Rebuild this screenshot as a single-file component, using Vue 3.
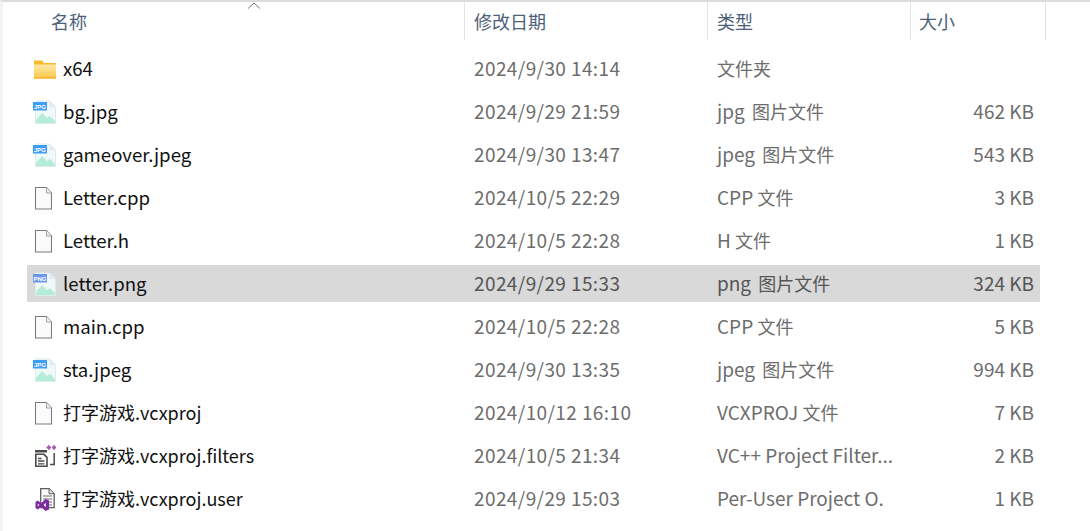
<script setup>
const rows = [
  { icon: 'folder', name: 'x64', date: '2024/9/30 14:14', latin: '', type: '文件夹', size: '' },
  { icon: 'jpg', name: 'bg.jpg', date: '2024/9/29 21:59', latin: 'jpg ', type: '图片文件', size: '462 KB' },
  { icon: 'jpg', name: 'gameover.jpeg', date: '2024/9/30 13:47', latin: 'jpeg ', type: '图片文件', size: '543 KB' },
  { icon: 'file', name: 'Letter.cpp', date: '2024/10/5 22:29', latin: 'CPP ', type: '文件', size: '3 KB' },
  { icon: 'file', name: 'Letter.h', date: '2024/10/5 22:28', latin: 'H ', type: '文件', size: '1 KB' },
  { icon: 'png', name: 'letter.png', date: '2024/9/29 15:33', latin: 'png ', type: '图片文件', size: '324 KB', selected: true },
  { icon: 'file', name: 'main.cpp', date: '2024/10/5 22:28', latin: 'CPP ', type: '文件', size: '5 KB' },
  { icon: 'jpg', name: 'sta.jpeg', date: '2024/9/30 13:35', latin: 'jpeg ', type: '图片文件', size: '994 KB' },
  { icon: 'file', name: '打字游戏.vcxproj', cjk: true, date: '2024/10/12 16:10', latin: 'VCXPROJ ', type: '文件', size: '7 KB' },
  { icon: 'filters', name: '打字游戏.vcxproj.filters', cjk: true, date: '2024/10/5 21:34', latin: 'VC++ Project Filter...', type: '', size: '2 KB' },
  { icon: 'user', name: '打字游戏.vcxproj.user', cjk: true, date: '2024/9/29 15:03', latin: 'Per-User Project O.', type: '', size: '1 KB' },
]
</script>

<template>
  <div class="page">
    <div class="head">
      <div class="hcell first">名称<svg class="caret" width="14" height="7" viewBox="0 0 14 7"><path d="M1 6.500 7 1l6 5.500" fill="none" stroke="#6f6f6f" stroke-width="1"/></svg></div>
      <div class="hcell">修改日期</div>
      <div class="hcell">类型</div>
      <div class="hcell last">大小</div>
    </div>
    <div class="list">
      <div v-for="r in rows" :key="r.name" class="row" :class="{ selected: r.selected }">
        <div class="name">
          <span class="icon">
            <svg v-if="r.icon === 'folder'" width="24" height="24" viewBox="0 0 24 24">
              <defs>
                <linearGradient id="fold" x1="0" y1="0" x2="0" y2="1">
                  <stop offset="0" stop-color="#fee9a6"/>
                  <stop offset="1" stop-color="#fcc94f"/>
                </linearGradient>
              </defs>
              <path d="M2 3.500h8l2 2.500h12v15.500H2z" fill="#f8b92b"/>
              <path d="M2 7.500h22v13H2z" fill="url(#fold)"/>
              <path d="M2 20h22v1.500H2z" fill="#f6b62e"/>
            </svg>
            <svg v-else-if="r.icon === 'jpg' || r.icon === 'png'" width="24" height="24" viewBox="0 0 24 24">
              <path d="M3.500 1h14l6 6v16.500h-20z" fill="#f1f8f9" stroke="#dcebec"/>
              <path d="M17.500 1v6h6" fill="#dfecee"/>
              <path d="M4 23v-3l6-7 5 5 3-2 5 5v2z" fill="#b4ecd7"/>
              <rect x="1" y="2" width="14" height="8.500" :fill="r.icon === 'jpg' ? '#3c9ef5' : '#6a96ec'"/>
              <text x="8" y="8.700" class="tag">{{ r.icon === 'jpg' ? 'JPG' : 'PNG' }}</text>
            </svg>
            <svg v-else-if="r.icon === 'file'" width="24" height="24" viewBox="0 0 24 24">
              <path d="M3.500 1.500h11l5 5.500v16h-16z" fill="#fbfbfb" stroke="#7c7c7c" stroke-width="1.100"/>
              <path d="M14.500 1.500V7h5" fill="#f1f1f1" stroke="#9a9a9a" stroke-width=".9"/>
            </svg>
            <svg v-else-if="r.icon === 'filters'" width="24" height="24" viewBox="0 0 24 24">
              <path d="M3 6h12v2.500H3z" fill="#4a4a4a"/>
              <path d="M3.800 10.300h8l3.200 3v9h-11.200z" fill="#fff" stroke="#4a4a4a" stroke-width="1.600"/>
              <path d="M6 14.500h3.500M6 17h6.500M6 19.800h6.500" stroke="#4a4a4a" stroke-width="1.300"/>
              <path d="M18 20.500h4.200V9" fill="none" stroke="#4a4a4a" stroke-width="1.500"/>
              <path d="M14.500 3.500h4.500M16.800 1.200v4.600M20 3.500h4M22 1.200v4.600" stroke="#a855b5" stroke-width="1.800"/>
            </svg>
            <svg v-else width="24" height="24" viewBox="0 0 24 24">
              <path d="M8.700 1.700h8.500l5 5v14h-13.500z" fill="#fafafa" stroke="#5e5e5e" stroke-width="1.300"/>
              <path d="M17 1.700v5h5" fill="#e4e4e4" stroke="#5e5e5e"/>
              <path d="M11 9h9M11 12h9M15 15h5M15 18h5" stroke="#6e6e6e" stroke-width="1.200"/>
              <path d="M3.500 15 6 13.500 9 16.300 13.500 12 17 13.600V22.400L13.500 24 9 19.700 6 22.500 3.500 21ZM5.800 16.500V19.500L7.300 18ZM13.800 15.800 11.500 18 13.800 20.200Z" fill="#7b2aa0" fill-rule="evenodd"/>
            </svg>
          </span>
          <span class="label" :class="{ wide: !r.cjk }">{{ r.name }}</span>
        </div>
        <div class="cell muted date">{{ r.date }}</div>
        <div class="cell muted"><span class="latin">{{ r.latin }}</span><span :class="{ pic: r.type === '图片文件' }">{{ r.type }}</span></div>
        <div class="cell muted size">{{ r.size }}</div>
      </div>
    </div>
  </div>
</template>

<style>
html, body { margin: 0; background: #fff; }
</style>

<style scoped>
.page {
  width: 1090px;
  height: 531px;
  box-sizing: border-box;
  overflow: hidden;
  background: #fff;
  border-top: 2px solid #dcdcdc;
  border-left: 3px solid #f3f3f3;
  font-family: "Noto Sans CJK SC", "Noto Sans", sans-serif;
  font-size: 18px;
}
.head {
  display: grid;
  grid-template-columns: 462px 243px 203px 135px;
  height: 38px;
  color: #4c607a;
}
.hcell {
  position: relative;
  border-right: 1px solid #e5e5e5;
  padding-left: 9px;
  line-height: 38px;
}
.hcell.first { padding-left: 48px; }
.hcell.last { padding-left: 8px; }
.caret { position: absolute; left: 244px; top: 0; }
.list {
  display: flex;
  flex-direction: column;
  gap: 6px;
  padding: 10px 0 0 24px;
}
.row {
  display: grid;
  grid-template-columns: 438px 243px 203px 129px;
  height: 37px;
  align-items: center;
  width: 1013px;
}
.row.selected { background: #d9d9d9; }
.name { display: flex; align-items: center; color: #111; padding-left: 5px; }
.icon { width: 24px; height: 24px; margin-right: 7px; display: flex; }
.label { white-space: nowrap; line-height: 27px; }
.label.wide { font-size: 18.6px; margin-bottom: 2px; }
.tag {
  font-family: "Liberation Sans", sans-serif;
  font-size: 6px;
  font-weight: 700;
  fill: #fff;
  text-anchor: middle;
}
.cell { padding-left: 9px; white-space: pre; line-height: 27px; margin-bottom: 1px; }
.muted { color: #6d6d6d; }
.selected .muted { color: #555; }
.date { font-size: 19px; letter-spacing: .4px; margin-bottom: 2px; }
.latin { font-size: 19px; }
.pic { margin-left: 3px; }
.size { padding-left: 0; padding-right: 6px; text-align: right; font-size: 19px; margin-bottom: 2px; }
</style>
